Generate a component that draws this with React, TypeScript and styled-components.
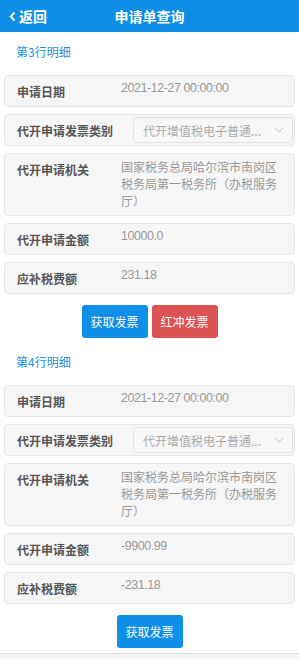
import React from "react";
import styled, { createGlobalStyle } from "styled-components";

const GlobalStyle = createGlobalStyle`
  body {
    margin: 0;
    background: #fff;
    font-family: "Liberation Sans", "Noto Sans CJK SC", sans-serif;
  }
`;

const Page = styled.div`
  width: 299px;
  overflow: hidden;
`;

const Header = styled.div`
  height: 32px;
  background: #0e8ee6;
  color: #fff;
  display: flex;
  align-items: center;
  position: relative;
`;

const Back = styled.div`
  display: flex;
  align-items: center;
  gap: 3px;
  padding-left: 9px;
  font-size: 14px;
  font-weight: bold;
  font-family: "Noto Sans CJK SC", sans-serif;
`;

const Title = styled.div`
  position: absolute;
  left: 0;
  right: 0;
  text-align: center;
  font-size: 14px;
  font-weight: bold;
  font-family: "Noto Sans CJK SC", sans-serif;
  pointer-events: none;
`;

const Heading = styled.div<{ $extra?: boolean }>`
  padding: ${(p) => (p.$extra ? "14px" : "10px")} 16px 13px;
  line-height: 20px;
  font-size: 12px;
  color: #1f8ed8;
  font-family: "Noto Sans CJK SC", sans-serif;
`;

const List = styled.div`
  display: flex;
  flex-direction: column;
  gap: 7px;
  padding: 0 4px;
`;

const Card = styled.div<{ $select?: boolean }>`
  display: flex;
  align-items: ${(p) => (p.$select ? "center" : "flex-start")};
  background: #f6f6f6;
  border: 1px solid #e6e6e6;
  border-radius: 4px;
  padding: ${(p) => (p.$select ? "2px 1px 2px 12px" : "4px 12px 6px 12px")};
`;

const Label = styled.div<{ $select?: boolean }>`
  flex: none;
  width: ${(p) => (p.$select ? "auto" : "104px")};
  padding-top: ${(p) => (p.$select ? "0" : "3px")};
  line-height: 17px;
  font-size: 12px;
  font-weight: bold;
  color: #555;
  font-family: "Noto Sans CJK SC", sans-serif;
`;

const Value = styled.div<{ $num?: boolean }>`
  flex: 1;
  min-width: 0;
  line-height: 17px;
  font-size: ${(p) => (p.$num ? "12.5px" : "12px")};
  letter-spacing: ${(p) => (p.$num ? "-0.45px" : "0")};
  color: #999;
  font-family: ${(p) => (p.$num ? '"Liberation Sans", sans-serif' : '"Noto Sans CJK SC", sans-serif')};
`;

const Select = styled.div`
  flex: 1;
  min-width: 0;
  margin-left: 20px;
  height: 26px;
  box-sizing: border-box;
  border: 1px solid #e2e2e2;
  border-radius: 4px;
  background: #f7f7f7;
  display: flex;
  align-items: center;
  padding: 0 8px 0 9px;
  gap: 6px;
  font-size: 12px;
  color: #aaa;
  font-family: "Noto Sans CJK SC", sans-serif;
`;

const SelectText = styled.span`
  flex: 1;
  white-space: nowrap;
  overflow: hidden;
`;

const Actions = styled.div`
  display: flex;
  justify-content: center;
  gap: 4px;
  margin-top: 11px;
`;

const Button = styled.button<{ $danger?: boolean }>`
  width: 66px;
  height: 33px;
  border: none;
  border-radius: 3px;
  background: ${(p) => (p.$danger ? "#dd5252" : "#0e8ee6")};
  color: #fff;
  font-size: 12px;
  font-family: "Noto Sans CJK SC", sans-serif;
  padding: 0;
`;

const Footer = styled.div`
  margin-top: 5px;
  height: 20px;
  border-top: 1px solid #dedede;
  background: #f3f3f3;
`;

type Row = { label: string; value: string; select?: boolean; num?: boolean };

const Chevron = () => (
  <svg width="7" height="11" viewBox="0 0 7 11">
    <path d="M5.5 1.5 L1.8 5.5 L5.5 9.5" fill="none" stroke="#fff" strokeWidth="2" />
  </svg>
);

const Down = () => (
  <svg width="10" height="6" viewBox="0 0 10 6">
    <path d="M0.5 0.5 L5 5 L9.5 0.5" fill="none" stroke="#c4c4c4" strokeWidth="1" />
  </svg>
);

const Detail = ({ title, rows, red, extra }: { title: string; rows: Row[]; red?: boolean; extra?: boolean }) => (
  <>
    <Heading $extra={extra}>{title}</Heading>
    <List>
      {rows.map((r) =>
        r.select ? (
          <Card key={r.label} $select>
            <Label $select>{r.label}</Label>
            <Select>
              <SelectText>{r.value}</SelectText>
              <Down />
            </Select>
          </Card>
        ) : (
          <Card key={r.label}>
            <Label>{r.label}</Label>
            <Value $num={r.num}>{r.value}</Value>
          </Card>
        )
      )}
    </List>
    <Actions>
      <Button>获取发票</Button>
      {red && <Button $danger>红冲发票</Button>}
    </Actions>
  </>
);

const office = "国家税务总局哈尔滨市南岗区税务局第一税务所（办税服务厅）";

const App = () => (
  <Page>
    <GlobalStyle />
    <Header>
      <Back>
        <Chevron />
        返回
      </Back>
      <Title>申请单查询</Title>
    </Header>
    <Detail
      title="第3行明细"
      red
      rows={[
        { label: "申请日期", value: "2021-12-27 00:00:00", num: true },
        { label: "代开申请发票类别", value: "代开增值税电子普通...", select: true },
        { label: "代开申请机关", value: office },
        { label: "代开申请金额", value: "10000.0", num: true },
        { label: "应补税费额", value: "231.18", num: true },
      ]}
    />
    <Detail
      title="第4行明细"
      extra
      rows={[
        { label: "申请日期", value: "2021-12-27 00:00:00", num: true },
        { label: "代开申请发票类别", value: "代开增值税电子普通...", select: true },
        { label: "代开申请机关", value: office },
        { label: "代开申请金额", value: "-9900.99", num: true },
        { label: "应补税费额", value: "-231.18", num: true },
      ]}
    />
    <Footer />
  </Page>
);

export default App;
